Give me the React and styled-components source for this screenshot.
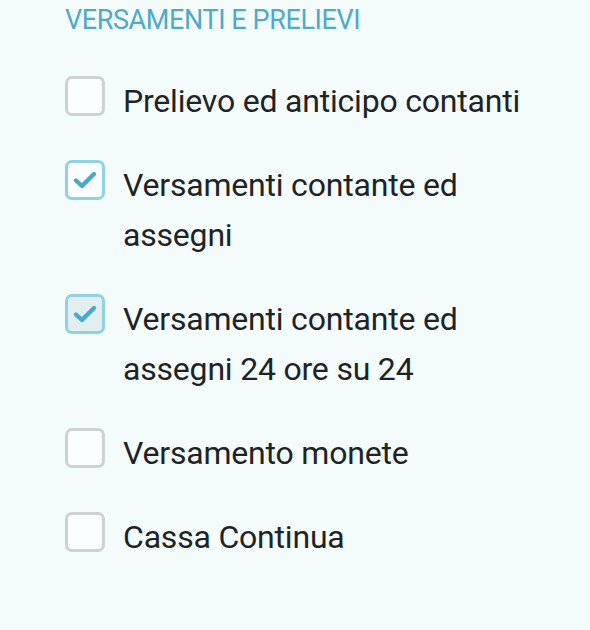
import React from "react";
import styled, { createGlobalStyle } from "styled-components";

const Global = createGlobalStyle`
  html, body { margin: 0; padding: 0; background: #f3fbfb; }
  body { font-family: Roboto, "Liberation Sans", sans-serif; }
`;

const Page = styled.div`
  min-height: 630px;
  background: #f3fbfb;
  padding: 3px 0 0 65px;
  box-sizing: border-box;
`;

const Title = styled.h2`
  margin: 0;
  font-family: Roboto, "Liberation Sans", sans-serif;
  font-weight: 400;
  font-size: 27px;
  line-height: 34px;
  color: #4eaac9;
  letter-spacing: -0.4px;
`;

const List = styled.div`
  display: flex;
  flex-direction: column;
  gap: 34px;
  margin-top: 39px;
`;

const Row = styled.label`
  display: flex;
  align-items: flex-start;
  gap: 18px;
`;

const Box = styled.span`
  flex: none;
  width: 40px;
  height: 40px;
  box-sizing: border-box;
  border-radius: 7px;
  border: 3px solid ${(p) => (p.$checked ? "#8fd2e3" : "#cfd2d3")};
  background: ${(p) => (p.$disabled ? "#e3eef1" : "#fbfefe")};
  display: flex;
  align-items: center;
  justify-content: center;
`;

const Label = styled.span`
  font-size: 32px;
  line-height: 50px;
  letter-spacing: -0.2px;
  color: #1f2326;
  max-width: 410px;
`;

const Check = () => (
  <svg width="26" height="20" viewBox="0 0 26 20">
    <path d="M4 10.5 L10 16 L22 4" fill="none" stroke="#4aa9c8" strokeWidth="4.4" strokeLinecap="round" strokeLinejoin="round" />
  </svg>
);

const items = [
  { text: "Prelievo ed anticipo contanti" },
  { text: "Versamenti contante ed assegni", checked: true },
  { text: "Versamenti contante ed assegni 24 ore su 24", checked: true, disabled: true },
  { text: "Versamento monete" },
  { text: "Cassa Continua" },
];

export default function App() {
  return (
    <>
      <Global />
      <Page>
        <Title>VERSAMENTI E PRELIEVI</Title>
        <List>
          {items.map((it) => (
            <Row key={it.text}>
              <Box $checked={it.checked} $disabled={it.disabled}>
                {it.checked && <Check />}
              </Box>
              <Label>{it.text}</Label>
            </Row>
          ))}
        </List>
      </Page>
    </>
  );
}
